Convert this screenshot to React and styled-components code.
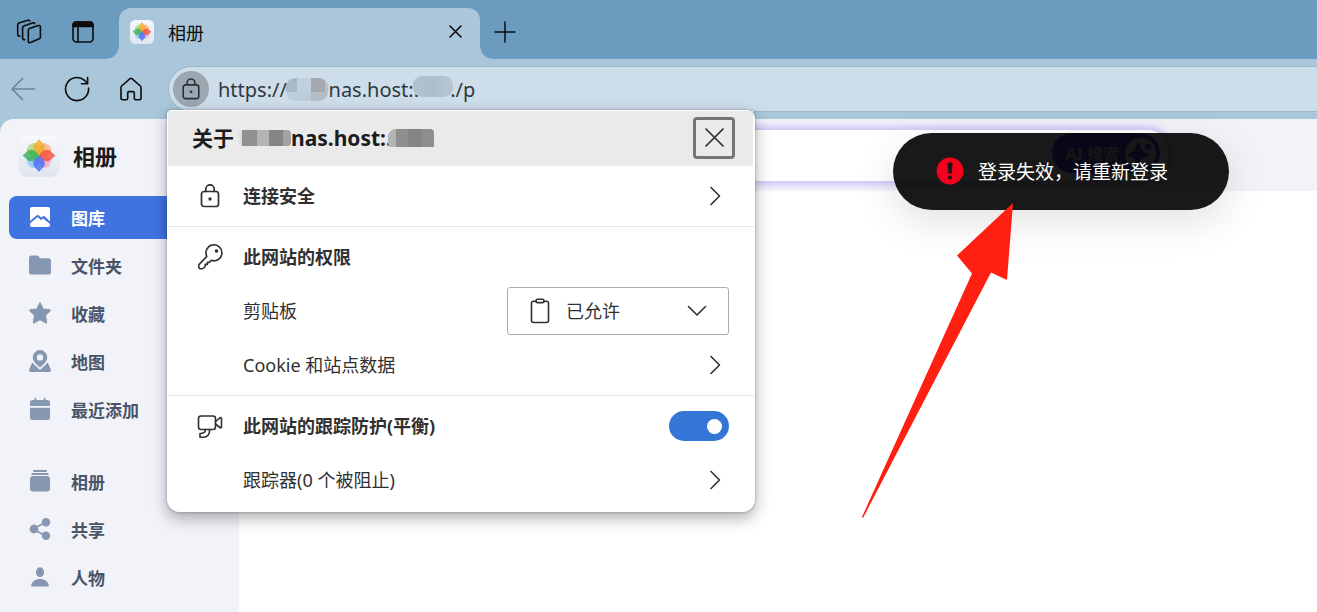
import React from "react";
import styled, { createGlobalStyle, css } from "styled-components";

const GlobalStyle = createGlobalStyle`
  * { box-sizing: border-box; }
  body {
    margin: 0;
    background: #a9c6db;
    color: #1b1b1b;
    font-family: "Noto Sans", "Noto Sans CJK SC", sans-serif;
    font-size: 18px;
  }
  button, input, select { font: inherit; color: inherit; }
  button { border: 0; padding: 0; background: none; cursor: pointer; }
  h1, h2, h3, ul { margin: 0; padding: 0; }
  svg { display: block; flex: none; }
`;

const Browser = styled.div`
  position: relative;
  display: flex;
  flex-direction: column;
  min-height: 100vh;
  overflow: hidden;
`;

/* ---------- browser chrome ---------- */

const TabStrip = styled.header`
  display: flex;
  align-items: flex-start;
  height: 59px;
  padding: 8px 0 0 14px;
  background: #6c9bc0;
`;

const IconButton = styled.button`
  display: grid;
  place-items: center;
  flex: none;
  width: ${(p) => p.$size || 30}px;
  height: 48px;
  color: ${(p) => p.$color || "#0c0c0c"};
`;

const WindowTools = styled.div`
  display: flex;
  gap: 24px;
  margin-right: 21px;
`;

const Tab = styled.div`
  position: relative;
  display: flex;
  align-items: center;
  width: 361px;
  height: 51px;
  margin-right: 10px;
  padding: 0 10px 4px 11px;
  border-radius: 12px 12px 0 0;
  background: #a9c6db;

  &::before,
  &::after {
    content: "";
    position: absolute;
    bottom: 0;
    width: 12px;
    height: 12px;
  }
  &::before {
    right: 100%;
    background: radial-gradient(circle at 0 0, transparent 11px, #a9c6db 12px);
  }
  &::after {
    left: 100%;
    background: radial-gradient(circle at 100% 0, transparent 11px, #a9c6db 12px);
  }
`;

const TabTitle = styled.span`
  flex: 1;
  margin-left: 14px;
  color: #0c0c0c;
`;

const Toolbar = styled.nav`
  display: flex;
  align-items: center;
  height: 60px;
  padding-left: 9px;
  background: #a9c6db;
`;

const NavTools = styled.div`
  display: flex;
  gap: 26px;
  margin-right: 23px;
`;

const AddressBar = styled.div`
  position: relative;
  display: flex;
  flex: 1;
  align-items: center;
  height: 46px;
  padding-left: 4px;
  border: 1px solid #9db7ca;
  border-right: 0;
  border-radius: 23px 0 0 23px;
  background: #cddde9;
`;

const SiteInfo = styled.button`
  display: grid;
  place-items: center;
  flex: none;
  width: 36px;
  height: 36px;
  border-radius: 50%;
  background: #9ba8b2;
  color: #2b2f33;
`;

const UrlInput = styled.input`
  flex: 1;
  min-width: 0;
  margin-left: 9px;
  padding: 0;
  border: 0;
  outline: 0;
  background: none;
  color: #303840;
  font-size: 20px;
  white-space: pre;
`;

const UrlMask = styled.span`
  position: absolute;
  top: ${(p) => (p.$tail ? 9 : 11)}px;
  left: ${(p) => (p.$tail ? 244 : 117)}px;
  width: ${(p) => (p.$tail ? 40 : 42)}px;
  height: ${(p) => (p.$tail ? 21 : 23)}px;
  border-radius: 9px;
  background: ${(p) =>
    p.$tail
      ? "linear-gradient(90deg, #b3c2ce, #aebecb 50%, #b7c6d1)"
      : `linear-gradient(90deg, #a9bac7 11px, #c0d1de 11px 25px, #a6a9b0 25px 39px, #b6bfc8 39px) top / 100% 14px no-repeat,
         linear-gradient(90deg, #bccdd9 25px, #b4bec6 25px)`};
`;

/* ---------- photo app ---------- */

const AppPage = styled.div`
  display: flex;
  flex: 1;
  border-top-left-radius: 14px;
  background: #f2f3f9;
  overflow: hidden;
`;

const Sidebar = styled.aside`
  flex: none;
  width: 239px;
  padding: 16px 9px 0;
`;

const Brand = styled.div`
  display: flex;
  align-items: center;
  gap: 13px;
  margin-bottom: 19px;
  padding-left: 9px;
`;

const BrandName = styled.h1`
  font-size: 22px;
  line-height: 32px;
`;

const NavList = styled.ul`
  display: flex;
  flex-direction: column;
  gap: 5px;
  margin-bottom: 29px;
  list-style: none;
`;

const NavLink = styled.a`
  display: flex;
  align-items: center;
  gap: 20px;
  height: 43px;
  padding: 0 0 1px 20px;
  border-radius: 8px;
  color: #4a5468;
  font-size: 17px;
  font-weight: 700;
  text-decoration: none;

  svg { color: #8697b1; }

  ${(p) =>
    p.$active &&
    css`
      background: #3f73e0;
      color: #fff;
      svg { color: #fff; }
    `}
`;

const Content = styled.main`
  display: flex;
  flex: 1;
  flex-direction: column;
  min-width: 0;
  background: #fff;
`;

const ContentHeader = styled.div`
  height: 72px;
  padding: 11px 149px 0 160px;
  background: #f2f3f9;
`;

const SearchBox = styled.form`
  display: flex;
  align-items: flex-start;
  height: 51px;
  padding: 3px 8px 0 0;
  border-radius: 20px;
  background: #fff;
  box-shadow: 0 0 8px 2px #bdb4f8;
`;

const SearchInput = styled.input`
  flex: 1;
  min-width: 0;
  height: 40px;
  border: 0;
  outline: 0;
  background: none;
`;

const AiButton = styled.button`
  display: flex;
  align-items: center;
  gap: 6px;
  height: 40px;
  padding: 0 4px 0 14px;
  border-radius: 20px;
  background: #4a4ee8;
  color: #e0d4c8;
  font-size: 16px;
  font-weight: 700;
`;

/* ---------- site information popup ---------- */

const Popup = styled.section`
  position: absolute;
  top: 110px;
  left: 167px;
  width: 588px;
  padding-bottom: 1px;
  border: 1px solid #fff;
  border-radius: 4px 8px 12px 12px;
  background: #fff;
  color: #303030;
  box-shadow: 0 6px 16px rgba(0, 0, 0, 0.32), 0 0 3px rgba(0, 0, 0, 0.3);
`;

const PopupHeader = styled.div`
  display: flex;
  align-items: center;
  justify-content: space-between;
  height: 55px;
  margin-right: 1px;
  padding: 0 18px 2px 24px;
  background: #eaeaea;
`;

const PopupTitle = styled.h2`
  display: flex;
  align-items: center;
  font-size: 21px;
  line-height: 32px;
  color: #1b1b1b;
`;

const TitleMask = styled.span`
  width: ${(p) => (p.$tail ? 46 : 52)}px;
  height: ${(p) => (p.$tail ? 18 : 16)}px;
  margin-left: ${(p) => (p.$tail ? -4 : 5)}px;
  border-radius: ${(p) => (p.$tail ? "8px 4px 0 4px" : "4px")};
  background: ${(p) =>
    p.$tail
      ? "linear-gradient(90deg, #b4b4b4 8px, #8f8f8f 8px 20px, #858585 20px 34px, #8e8e8e 34px)"
      : "linear-gradient(90deg, #dedede 3px, #909090 3px 18px, #b5b5b5 18px 30px, #858585 30px 44px, #a2a2a2 44px)"};
`;

const CloseButton = styled.button`
  display: grid;
  place-items: center;
  width: 42px;
  height: 42px;
  border: 3px solid #767676;
  border-radius: 4px;
`;

const Section = styled.div`
  padding: 3px 25px 3px 29px;

  & + & { border-top: 1px solid #e5e5e5; }
`;

const rowLayout = css`
  display: grid;
  grid-template-columns: 46px 1fr auto;
  align-items: center;
  width: 100%;
  height: 54px;
  line-height: 24px;
  text-align: left;
`;

const Row = styled.div`
  ${rowLayout}
`;

const RowButton = styled.button`
  ${rowLayout}
  padding-right: 8px;
`;

const RowLabel = styled.label`
  grid-column: 2;
  font-weight: ${(p) => (p.$strong ? 700 : 400)};
`;

const RowTitle = styled.h3`
  grid-column: 2;
  font-size: 18px;
`;

const RowText = styled.span`
  grid-column: 2;
  font-weight: ${(p) => (p.$strong ? 700 : 400)};
`;

const SelectWrap = styled.div`
  position: relative;
  width: 222px;
`;

const Select = styled.select`
  width: 100%;
  height: 48px;
  padding: 0 48px 0 58px;
  border: 1px solid #adadad;
  border-radius: 3px;
  background: #fff;
  appearance: none;
`;

const SelectIcon = styled.span`
  position: absolute;
  top: 0;
  bottom: 0;
  ${(p) => (p.$end ? "right: 21px" : "left: 22px")};
  display: grid;
  place-items: center;
  pointer-events: none;
`;

const Switch = styled.input`
  display: flex;
  align-items: center;
  justify-content: flex-start;
  width: 60px;
  height: 30px;
  margin: 0;
  padding: 0 7px;
  border-radius: 15px;
  background: #8a8a8a;
  appearance: none;

  &::before {
    content: "";
    width: 15px;
    height: 15px;
    border-radius: 50%;
    background: #fff;
  }
  &:checked {
    justify-content: flex-end;
    background: #3476d6;
  }
`;

/* ---------- toast and pointer ---------- */

const Toast = styled.div`
  position: absolute;
  top: 133px;
  right: 88px;
  display: flex;
  align-items: center;
  gap: 14px;
  width: 336px;
  height: 77px;
  padding: 0 0 1px 43px;
  border-radius: 39px;
  background: rgba(0, 0, 0, 0.9);
  color: #fff;
  font-size: 19px;
  white-space: nowrap;
  box-shadow: 0 12px 40px rgba(0, 0, 0, 0.12);
`;

const Pointer = styled.svg`
  position: absolute;
  top: 203px;
  right: 303px;
  pointer-events: none;
`;

/* ---------- icons ---------- */

const Line = ({ w, h, sw = 2, children }) => (
  <svg width={w} height={h} viewBox={`0 0 ${w} ${h}`} fill="none" stroke="currentColor"
    strokeWidth={sw} strokeLinecap="round" strokeLinejoin="round" aria-hidden="true">
    {children}
  </svg>
);

const Solid = ({ children }) => (
  <svg width="22" height="22" viewBox="0 0 22 22" fill="currentColor" aria-hidden="true">
    {children}
  </svg>
);

const WorkspacesIcon = () => (
  <Line w={26} h={26} sw={1.6}>
    <path d="M13.4 9.6 L22.3 6.6 Q24.4 6 24.4 8.1 V18.2 Q24.4 19.4 23.3 19.8 L14.5 23.6 Q12.3 24.4 12.3 22.2 V11.2 Q12.3 10 13.4 9.6 Z" />
    <path d="M8.6 20.6 Q6.6 20.9 6.6 18.8 V8.6 Q6.6 7.4 7.7 6.9 L16.9 3.8 Q18.4 3.4 18.8 4.5" />
    <path d="M4 17.2 Q1.7 17.2 1.7 15.2 V5.8 Q1.7 4.5 2.8 4.1 L11.8 1.3 Q13.2 1 13.8 1.8" />
  </Line>
);

const PanelIcon = () => (
  <Line w={22} h={22} sw={1.6}>
    <rect x="1" y="1" width="20" height="20" rx="3.5" />
    <path d="M6 5 V21" />
    <path d="M1 5.5 V4 Q1 1 4 1 H18 Q21 1 21 4 V5.5 Z" fill="currentColor" />
  </Line>
);

const CrossIcon = ({ size, sw }) => (
  <Line w={size} h={size} sw={sw}>
    <path d={`M1 1 L${size - 1} ${size - 1} M${size - 1} 1 L1 ${size - 1}`} />
  </Line>
);

const LockIcon = () => (
  <svg width="20" height="22" viewBox="0 0 20 24" fill="none" stroke="currentColor" strokeWidth="1.7" aria-hidden="true">
    <rect x="1.5" y="7.5" width="17" height="15" rx="2.5" />
    <path d="M5.8 7.5 V5.2 A4.2 4.2 0 0 1 14.2 5.2 V7.5" />
    <circle cx="10" cy="15" r="1.5" fill="currentColor" stroke="none" />
  </svg>
);

const ChevronRight = () => (
  <Line w={12} h={20} sw={1.6}><path d="M2 1.5 L10.5 10 L2 18.5" /></Line>
);

const mainPetal = "M0 0 C-4 -2.500 -6 -5.500 -5.800 -8.500 C-5.500 -11.500 -2.500 -13 0 -16.500 C2.500 -13 5.500 -11.500 5.800 -8.500 C6 -5.500 4 -2.500 0 0 Z";
const sidePetal = "M0 0 C-4 -2.500 -6.500 -6 -6 -9.500 Q-5.600 -12.500 -4 -13.500 Q0 -13.500 0 -15.500 Q0 -13.500 4 -13.500 Q5.600 -12.500 6 -9.500 C6.500 -6 4 -2.500 0 0 Z";
const petals = [
  [45, "#fb9d68", 0.6], [135, "#f584a8", 0.5], [225, "#59b6f4", 0.5], [315, "#8fd257", 0.6],
  [0, "#f7a51f", 0.78], [90, "#f94a35", 0.78], [180, "#4468f8", 0.78], [270, "#33ae50", 0.78],
];

const FlowerLogo = ({ size }) => (
  <svg width={size} height={size} viewBox="0 0 42 42" aria-hidden="true">
    <defs>
      <linearGradient id={`tile${size}`} x1="0" y1="0" x2="0" y2="1">
        <stop offset="0" stopColor="#f7f8fb" />
        <stop offset="1" stopColor="#dfe5f0" />
      </linearGradient>
    </defs>
    <rect width="42" height="42" rx="9" fill={`url(#tile${size})`} />
    {petals.map(([angle, color, opacity]) => (
      <path key={angle} d={angle % 90 ? sidePetal : mainPetal} fill={color} fillOpacity={opacity}
        transform={`translate(21 20.5) rotate(${angle})`} />
    ))}
  </svg>
);

const GalleryIcon = () => (
  <Solid>
    <path d="M3 1 H19 Q21 1 21 3 V15.5 L16 10.7 Q14.8 9.6 13.5 10.6 L12.2 11.6 L10 9.5 Q8.7 8.5 7.4 9.6 L1 15 V3 Q1 1 3 1 Z" />
    <path d="M1 17.5 L8 11.5 Q8.8 11 9.5 11.7 L11.2 13.5 L13.3 14.8 L12.6 13 L14.2 12.5 L21 18 V19 Q21 21 19 21 H3 Q1 21 1 19 Z" />
  </Solid>
);
const FolderIcon = () => (
  <Solid><path d="M2.5 1.5 H8 Q9 1.5 9.6 2.3 L11 4.2 H19.5 Q22 4.2 22 6.7 V18 Q22 20.5 19.5 20.5 H2.5 Q0 20.5 0 18 V4 Q0 1.5 2.5 1.5 Z" /></Solid>
);
const StarIcon = () => (
  <Solid><path d="M10 1.2 Q11 -.6 12 1.2 L14.5 6.5 L20.8 7.3 Q22.6 7.8 21.4 9.2 L17 13.5 L18.2 20 Q18.2 21.9 16.5 21.2 L11 18.2 L5.500 21.2 Q3.8 21.9 3.8 20 L5 13.5 L.6 9.2 Q-.6 7.8 1.2 7.3 L7.500 6.500 Z" /></Solid>
);
const MapIcon = () => (
  <Solid>
    <path fillRule="evenodd" d="M11 0 A7.4 7.4 0 0 1 18.2 7.4 C18.2 11.5 14 14.6 11 17.5 C8 14.6 3.8 11.5 3.8 7.4 A7.4 7.4 0 0 1 11 0 Z M11 4.2 A3.2 3.2 0 1 0 11 10.6 A3.2 3.2 0 1 0 11 4.2 Z" />
    <path d="M3.2 12.5 L11 20 L18.8 12.5 L21.8 19.5 Q22.3 22 20 22 H2 Q-.3 22 .2 19.5 Z" />
  </Solid>
);
const CalendarIcon = () => (
  <Solid>
    <path d="M3.5 2 H5.5 V0 H7.3 V2 H14.7 V0 H16.5 V2 H18.5 Q21 2 21 4.5 V8 H1 V4.5 Q1 2 3.5 2 Z" />
    <path d="M1 9.8 H21 V19.5 Q21 22 18.5 22 H3.5 Q1 22 1 19.5 Z" />
  </Solid>
);
const AlbumIcon = () => (
  <Solid>
    <rect x="4" y="0" width="14" height="2" rx="1" />
    <rect x="2.5" y="3" width="17" height="2" rx="1" />
    <rect x="1" y="6" width="20" height="15.5" rx="3" />
  </Solid>
);
const ShareIcon = () => (
  <Solid>
    <path d="M4 11 L17 4 M4 11 L17 18" stroke="currentColor" strokeWidth="1.8" />
    <circle cx="5" cy="11" r="4.4" /><circle cx="17" cy="4.2" r="4.2" /><circle cx="17" cy="17.8" r="4.2" />
  </Solid>
);
const PersonIcon = () => (
  <Solid>
    <ellipse cx="11" cy="6.3" rx="4" ry="5" />
    <path d="M2 20.5 C2.5 15.5 6 13 11 13 C16 13 19.5 15.5 20 20.5 Z" />
  </Solid>
);

const library = [
  ["图库", GalleryIcon], ["文件夹", FolderIcon], ["收藏", StarIcon], ["地图", MapIcon], ["最近添加", CalendarIcon],
];
const collections = [["相册", AlbumIcon], ["共享", ShareIcon], ["人物", PersonIcon]];

const NavGroup = ({ items, active }) => (
  <NavList>
    {items.map(([label, Icon]) => (
      <li key={label}>
        <NavLink href="#" $active={label === active}><Icon />{label}</NavLink>
      </li>
    ))}
  </NavList>
);

const url = `https://${"\u00a0".repeat(8)}nas.host:.${"\u00a0".repeat(6)}./p`;

export default function App() {
  return (
    <Browser>
      <GlobalStyle />
      <TabStrip>
        <WindowTools>
          <IconButton aria-label="工作区"><WorkspacesIcon /></IconButton>
          <IconButton aria-label="标签页操作"><PanelIcon /></IconButton>
        </WindowTools>
        <Tab>
          <FlowerLogo size={24} />
          <TabTitle>相册</TabTitle>
          <IconButton aria-label="关闭标签页"><CrossIcon size={13} sw={1.6} /></IconButton>
        </Tab>
        <IconButton aria-label="新建标签页">
          <Line w={22} h={22} sw={1.5}><path d="M11 1 V21 M1 11 H21" /></Line>
        </IconButton>
      </TabStrip>

      <Toolbar>
        <NavTools>
          <IconButton $size={28} $color="#6e8494" aria-label="后退">
            <Line w={26} h={24} sw={1.7}><path d="M24.5 12 H2 M12.5 1.5 L2 12 L12.5 22.5" /></Line>
          </IconButton>
          <IconButton $size={28} aria-label="刷新">
            <Line w={26} h={26} sw={1.6}>
              <path d="M24.5 12 A11.5 11.5 0 1 1 20.5 4.3 L23.5 7.5 M23.6 1.5 V7.8 H17.5" />
            </Line>
          </IconButton>
          <IconButton $size={28} aria-label="主页">
            <Line w={24} h={24} sw={1.6}>
              <path d="M2 10.5 Q2 9.6 2.7 9 L11 1.6 Q12 .8 13 1.6 L21.3 9 Q22 9.6 22 10.5 V21 Q22 22.7 20.3 22.7 H16.8 Q15.3 22.7 15.3 21.2 V16 Q15.3 14.6 14 14.6 H10 Q8.7 14.6 8.7 16 V21.2 Q8.7 22.7 7.2 22.7 H3.7 Q2 22.7 2 21 Z" />
            </Line>
          </IconButton>
        </NavTools>
        <AddressBar>
          <SiteInfo aria-label="查看站点信息"><LockIcon /></SiteInfo>
          <UrlInput aria-label="地址栏" defaultValue={url} />
          <UrlMask />
          <UrlMask $tail />
        </AddressBar>
      </Toolbar>

      <AppPage>
        <Sidebar>
          <Brand>
            <FlowerLogo size={42} />
            <BrandName>相册</BrandName>
          </Brand>
          <NavGroup items={library} active="图库" />
          <NavGroup items={collections} />
        </Sidebar>
        <Content>
          <ContentHeader>
            <SearchBox>
              <SearchInput type="search" aria-label="搜索" />
              <AiButton type="button">
                AI 搜索
                <svg width="31" height="31" viewBox="0 0 31 31" aria-hidden="true">
                  <circle cx="15.5" cy="15.5" r="15.5" fill="#f4ece4" />
                  <path d="M13 6 Q14 15 23 17 Q14 18 13 27 Q12 18 4 17 Q12 15 13 6 Z" fill="#4a4ee8" stroke="#4a4ee8" strokeWidth="3" strokeLinejoin="round" />
                  <circle cx="23" cy="9" r="3" fill="#4a4ee8" />
                </svg>
              </AiButton>
            </SearchBox>
          </ContentHeader>
        </Content>
      </AppPage>

      <Popup aria-label="站点信息">
        <PopupHeader>
          <PopupTitle>关于<TitleMask />nas.host:.<TitleMask $tail /></PopupTitle>
          <CloseButton aria-label="关闭"><CrossIcon size={19} sw={1.7} /></CloseButton>
        </PopupHeader>
        <Section>
          <RowButton>
            <Line w={26} h={24} sw={1.7}>
              <rect x="4.5" y="7.5" width="17" height="15" rx="2.5" />
              <path d="M8.8 7.5 V5 A4.2 4.2 0 0 1 17.2 5 V7.5" />
              <circle cx="13" cy="15" r=".8" fill="currentColor" />
            </Line>
            <RowText $strong>连接安全</RowText>
            <ChevronRight />
          </RowButton>
        </Section>
        <Section>
          <Row>
            <Line w={26} h={26} sw={1.6}>
              <path d="M9.8 12.4 A8 8 0 1 1 14.2 16.3 L12.2 18.4 H10.4 V20.4 H8.2 V22.4 L6.6 24 Q5.8 24.7 4.8 24.7 H3.2 Q1.8 24.7 1.8 23.3 V21.5 Q1.8 20.7 2.4 20.1 Z" />
              <circle cx="19.5" cy="7" r="1" fill="currentColor" />
            </Line>
            <RowTitle>此网站的权限</RowTitle>
          </Row>
          <Row>
            <RowLabel htmlFor="clipboard">剪贴板</RowLabel>
            <SelectWrap>
              <Select id="clipboard" defaultValue="allow">
                <option value="allow">已允许</option>
                <option value="block">已阻止</option>
              </Select>
              <SelectIcon>
                <Line w={22} h={26} sw={1.6}>
                  <path d="M7 3.2 H4.5 Q2.5 3.2 2.5 5.2 V22.5 Q2.5 24.5 4.5 24.5 H17.5 Q19.5 24.5 19.5 22.5 V5.2 Q19.5 3.2 17.5 3.2 H15" />
                  <rect x="7" y="1.2" width="8" height="3.4" rx="1.7" />
                </Line>
              </SelectIcon>
              <SelectIcon $end>
                <Line w={22} h={12} sw={1.6}><path d="M2.5 1.5 L11 10 L19.5 1.5" /></Line>
              </SelectIcon>
            </SelectWrap>
          </Row>
          <RowButton>
            <RowText>Cookie 和站点数据</RowText>
            <ChevronRight />
          </RowButton>
        </Section>
        <Section>
          <Row>
            <Line w={26} h={26} sw={1.6}>
              <rect x="1.5" y="3" width="17" height="13.5" rx="2.5" />
              <path d="M18.5 8.5 L23 4.8 Q24.5 4 24.5 5.8 V13.8 Q24.5 15.5 23 14.5 L18.5 11 M8.5 16.5 Q8.5 20.5 3 20.5 V24.3 H6 Q12.7 24.3 12.7 16.5" />
            </Line>
            <RowLabel $strong htmlFor="tracking">此网站的跟踪防护(平衡)</RowLabel>
            <Switch id="tracking" type="checkbox" role="switch" defaultChecked />
          </Row>
          <RowButton>
            <RowText>跟踪器(0 个被阻止)</RowText>
            <ChevronRight />
          </RowButton>
        </Section>
      </Popup>

      <Toast role="alert">
        <svg width="28" height="28" viewBox="0 0 28 28" aria-hidden="true">
          <circle cx="14" cy="14" r="13.4" fill="#f5001d" />
          <path d="M12 6 H16 L15.5 16 H12.5 Z" fill="#191919" stroke="#191919" strokeLinejoin="round" />
          <circle cx="14" cy="20.5" r="2.1" fill="#191919" />
        </svg>
        登录失效，请重新登录
      </Toast>

      <Pointer width="152" height="316" viewBox="0 0 152 316" aria-hidden="true">
        <path d="M151 0 L145 77 L129 69.500 L1 315 L0 314 L110 70.500 L95 52.500 Z" fill="#ff2011" />
      </Pointer>
    </Browser>
  );
}
